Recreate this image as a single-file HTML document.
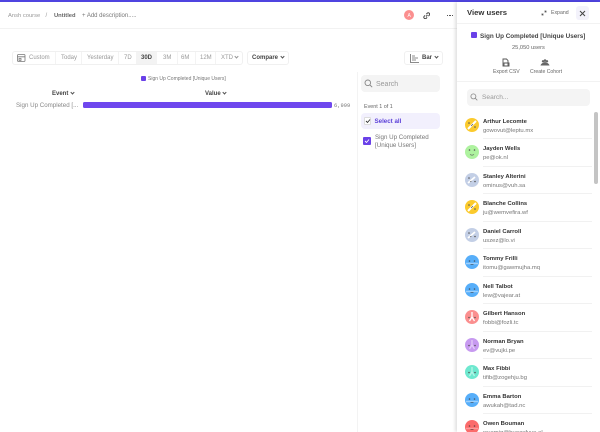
<!DOCTYPE html>
<html><head><meta charset="utf-8"><style>
html,body{margin:0;padding:0;width:600px;height:432px;overflow:hidden;background:#fff}
body{position:relative;font-family:"Liberation Sans",sans-serif;color:#555;filter:blur(.3px)}
.t,.b{position:absolute;white-space:nowrap}
.t{line-height:10px;font-size:6px;margin-top:1px}
.b{box-sizing:border-box}
.d{position:absolute;width:2px;height:2px;border-bottom:1px solid #555;border-right:1px solid #555;transform:rotate(45deg);box-sizing:content-box}
.n{left:483px;font-size:5.9px;font-weight:bold;color:#333}
.e{left:483px;font-size:5.9px;color:#777}
.a{position:absolute;left:465px;width:14px;height:14px}
.l{position:absolute;left:483px;width:109px;height:1px;background:#f1f1f1}
.g{color:#666;font-size:6px}
.r{margin-top:0}
</style></head><body>
<svg width="0" height="0" style="position:absolute"><defs>
<g id="f1"><circle cx="7" cy="7" r="7" fill="#fbca2d"/><path d="M3 11 11 3" stroke="#fff" stroke-width="2"/><circle cx="4" cy="5" r=".8" fill="#555"/><circle cx="10" cy="9" r=".8" fill="#555"/><path d="M6 8 8 6" stroke="#555" stroke-width=".7"/></g>
<g id="f2"><circle cx="7" cy="7" r="7" fill="#aef29f"/><circle cx="4.500" cy="5" r=".8" fill="#555"/><circle cx="9.500" cy="5" r=".8" fill="#555"/><path d="M5 9.500Q7 10.800 9 9.500" stroke="#555" stroke-width=".7" fill="none"/></g>
<g id="f3"><circle cx="7" cy="7" r="7" fill="#c3cfe6"/><path d="M3 10 10 4" stroke="#fff" stroke-width="1.800"/><circle cx="4" cy="5" r=".8" fill="#555"/><circle cx="10" cy="8.500" r=".8" fill="#555"/><path d="M5 9 6.500 8" stroke="#555" stroke-width=".7"/></g>
<g id="f4"><circle cx="7" cy="7" r="7" fill="#57aef9"/><path d="M1 8.500H13" stroke="#9fd0fb" stroke-width="1.500"/><circle cx="4.500" cy="6" r=".8" fill="#456"/><circle cx="9.500" cy="6" r=".8" fill="#456"/><path d="M5.500 9.500H8.500" stroke="#456" stroke-width=".7"/></g>
<g id="f5"><circle cx="7" cy="7" r="7" fill="#fb8f8f"/><path d="M7 2V7L4.500 11M7 7 9.500 11" stroke="#fff" stroke-width="1.300" fill="none"/><circle cx="4" cy="7.500" r=".8" fill="#555"/><circle cx="10" cy="7.500" r=".8" fill="#555"/></g>
<g id="f6"><circle cx="7" cy="7" r="7" fill="#c79af0"/><path d="M7 2V7L4.500 11M7 7 9.500 11" stroke="#e3ccf8" stroke-width="1.300" fill="none"/><circle cx="4" cy="7.500" r=".8" fill="#555"/><circle cx="10" cy="7.500" r=".8" fill="#555"/></g>
<g id="f7"><circle cx="7" cy="7" r="7" fill="#6ee8cf"/><path d="M7 2V7L4.500 11M7 7 9.500 11" stroke="#b6f4e7" stroke-width="1.300" fill="none"/><circle cx="4" cy="7.500" r=".8" fill="#555"/><circle cx="10" cy="7.500" r=".8" fill="#555"/></g>
<g id="f8"><circle cx="7" cy="7" r="7" fill="#fb6b6b"/><path d="M1 8.500H13" stroke="#fc9a9a" stroke-width="1.500"/><circle cx="4.500" cy="6" r=".8" fill="#644"/><circle cx="9.500" cy="6" r=".8" fill="#644"/><path d="M5.500 9.500H8.500" stroke="#644" stroke-width=".7"/></g>
</defs></svg>
<div class="b" style="left:0;top:0;width:600px;height:2px;background:#4f44e0"></div>
<div class="b" style="left:0;top:28px;width:457px;height:1px;background:#f2f2f2"></div>
<span class="t" style="left:8px;top:10px;color:#999;font-size:5.800px">Ansh course</span>
<span class="t" style="left:45.500px;top:10px;color:#999">/</span>
<span class="t" style="left:54px;top:10px;color:#666;font-weight:bold;font-size:5.800px">Untitled</span>
<span class="t" style="left:82px;top:10px;color:#777">+ Add description.....</span>
<div class="b" style="left:404px;top:10px;width:10px;height:10px;border-radius:50%;background:#fb8f8f"></div>
<span class="t" style="left:407.500px;top:9.500px;color:#fff;font-size:5px">A</span>
<svg style="position:absolute;left:422.500px;top:11.500px" width="7.500" height="7.500" viewBox="0 0 10 10" fill="none" stroke="#444" stroke-width="1.300"><path d="M4 6 6 4M4.500 2.800 5.600 1.700a1.600 1.600 0 0 1 2.700 2.700L7.200 5.500M5.500 7.200 4.400 8.300A1.600 1.600 0 0 1 1.700 5.600L2.800 4.500"/></svg>
<div class="b" style="left:447px;top:14.500px;width:1.300px;height:1.300px;background:#555"></div>
<div class="b" style="left:449.400px;top:14.500px;width:1.300px;height:1.300px;background:#555"></div>
<div class="b" style="left:451.800px;top:14.500px;width:1.300px;height:1.300px;background:#555"></div>

<div class="b" style="left:12px;top:51px;width:231px;height:14px;border:1px solid #f0f0f0;border-radius:3px"></div>
<svg style="position:absolute;left:17px;top:54px" width="9" height="8" viewBox="0 0 9 8" fill="none" stroke="#777" stroke-width=".8"><rect x=".5" y=".5" width="7.500" height="7" rx="1"/><path d="M.5 2.800H8M2 4.500h2v1.800H2z"/></svg>
<span class="t g r" style="left:29px;top:53px;color:#999">Custom</span>
<span class="t g r" style="left:61px;top:53px;color:#999">Today</span>
<span class="t g r" style="left:87px;top:53px;color:#999">Yesterday</span>
<span class="t g r" style="left:124px;top:53px;color:#999">7D</span>
<div class="b" style="left:136px;top:52px;width:21px;height:12px;background:#f3f3f3"></div>
<span class="t r" style="left:141px;top:53px;color:#444;font-weight:bold">30D</span>
<span class="t g r" style="left:163px;top:53px;color:#999">3M</span>
<span class="t g r" style="left:181px;top:53px;color:#999">6M</span>
<span class="t g r" style="left:200px;top:53px;color:#999">12M</span>
<span class="t g r" style="left:221px;top:53px;color:#999">XTD</span>
<div class="d" style="left:235px;top:55px;border-color:#999"></div>
<div class="b" style="left:55px;top:52px;width:1px;height:12px;background:#f3f3f3"></div>
<div class="b" style="left:81px;top:52px;width:1px;height:12px;background:#f3f3f3"></div>
<div class="b" style="left:118px;top:52px;width:1px;height:12px;background:#f3f3f3"></div>
<div class="b" style="left:177px;top:52px;width:1px;height:12px;background:#f3f3f3"></div>
<div class="b" style="left:195px;top:52px;width:1px;height:12px;background:#f3f3f3"></div>
<div class="b" style="left:215px;top:52px;width:1px;height:12px;background:#f3f3f3"></div>
<div class="b" style="left:247px;top:51px;width:42px;height:14px;border:1px solid #f0f0f0;border-radius:3px"></div>
<span class="t r" style="left:252px;top:53px;color:#444;font-weight:bold">Compare</span>
<div class="d" style="left:280.500px;top:55px"></div>

<div class="b" style="left:404px;top:51px;width:39px;height:14px;border:1px solid #f0f0f0;border-radius:3px"></div>
<svg style="position:absolute;left:410px;top:53.500px" width="9" height="9" viewBox="0 0 9 9" fill="none" stroke="#666" stroke-width=".8"><path d="M.5 0v8.500H9M2 2h3M2 4h6M2 6h4"/></svg>
<span class="t r" style="left:422px;top:53px;color:#444;font-weight:bold">Bar</span>
<div class="d" style="left:434.500px;top:55px"></div>

<div class="b" style="left:141px;top:76px;width:5px;height:5px;background:#6a41e8;border-radius:1px"></div>
<span class="t r" style="left:148px;top:74px;font-size:5px;color:#777">Sign Up Completed [Unique Users]</span>
<span class="t" style="left:52px;top:88px;font-weight:bold;color:#444">Event</span>
<div class="d" style="left:70.500px;top:90.500px"></div>
<span class="t" style="left:205px;top:88px;font-weight:bold;color:#444">Value</span>
<div class="d" style="left:222.500px;top:90.500px"></div>
<span class="t" style="left:16px;top:100px;color:#888;font-size:6.200px">Sign Up Completed [...</span>
<div class="b" style="left:83px;top:102px;width:249px;height:6px;background:#6f47ee;border-radius:1.500px"></div>
<span class="t" style="left:334px;top:99.500px;font-family:'Liberation Mono',monospace;font-size:5.400px;color:#777">6,999</span>

<div class="b" style="left:357px;top:72px;width:1px;height:360px;background:#f3f3f3"></div>
<div class="b" style="left:361px;top:75px;width:79px;height:17px;background:#f4f4f4;border-radius:4px"></div>
<svg style="position:absolute;left:364px;top:79px" width="9" height="9" viewBox="0 0 9 9" fill="none" stroke="#888" stroke-width=".9"><circle cx="3.800" cy="3.800" r="2.800"/><path d="M6 6 8.200 8.200"/></svg>
<span class="t" style="left:376px;top:79px;font-size:7px;color:#999">Search</span>
<span class="t" style="left:364px;top:101px;font-size:5.400px;color:#666">Event 1 of 1</span>
<div class="b" style="left:361px;top:113px;width:79px;height:16px;background:#f2f0fd;border-radius:4px"></div>
<div class="b" style="left:364px;top:117px;width:7px;height:8px;background:#fff;border:.5px solid #ddd;border-radius:1px"></div>
<svg style="position:absolute;left:365px;top:118px" width="6" height="6" viewBox="0 0 6 6" fill="none" stroke="#333" stroke-width=".9"><path d="M1 3 2.500 4.500 5 1.500"/></svg>
<span class="t" style="left:374.500px;top:116px;font-weight:bold;color:#5b3fd8;font-size:6.200px">Select all</span>
<div class="b" style="left:363px;top:137px;width:8px;height:8px;background:#6a41e8;border-radius:1px"></div>
<svg style="position:absolute;left:364px;top:138px" width="6" height="6" viewBox="0 0 6 6" fill="none" stroke="#fff" stroke-width=".9"><path d="M1 3 2.500 4.500 5 1.500"/></svg>
<span class="t" style="left:375px;top:133px;color:#777;font-size:6.200px;line-height:7.500px">Sign Up Completed<br>[Unique Users]</span>

<div class="b" style="left:457px;top:2px;width:143px;height:430px;background:#fff;box-shadow:-2px 0 3px rgba(0,0,0,.12)"></div>
<span class="t" style="left:467px;top:7px;font-size:7.700px;font-weight:bold;color:#333">View users</span>
<svg style="position:absolute;left:541px;top:9.500px" width="6" height="6" viewBox="0 0 6 6" fill="none" stroke="#555" stroke-width=".8"><path d="M1 5 2.300 3.700M3.700 2.300 5 1M1 3.500V5H2.500M3.500 1H5V2.500"/></svg>
<span class="t" style="left:551px;top:7px;font-size:5.200px;color:#666">Expand</span>
<div class="b" style="left:576px;top:6px;width:13px;height:14px;background:#f3f2fb;border-radius:3px"></div>
<svg style="position:absolute;left:579px;top:9.500px" width="7" height="7" viewBox="0 0 7 7" fill="none" stroke="#444" stroke-width="1"><path d="M1 1 6 6M6 1 1 6"/></svg>
<div class="b" style="left:457px;top:23px;width:143px;height:1px;background:#f2f2f2"></div>
<div class="b" style="left:471px;top:32px;width:6px;height:6px;background:#6a41e8;border-radius:1px"></div>
<span class="t" style="left:480px;top:31px;font-size:6.350px;font-weight:bold;color:#444">Sign Up Completed [Unique Users]</span>
<span class="t" style="left:512px;top:42px;font-size:5.700px;color:#666">25,050 users</span>
<svg style="position:absolute;left:501px;top:58px" width="9" height="9" viewBox="0 0 9 9" fill="none" stroke="#555" stroke-width=".9"><path d="M2 8V1h3.500L7 2.500V8zM3 5h5v3H3z"/></svg>
<span class="t" style="left:493px;top:66px;font-size:5.100px;color:#666">Export CSV</span>
<svg style="position:absolute;left:540px;top:59px" width="10" height="7" viewBox="0 0 10 7" fill="#666"><circle cx="3" cy="2.300" r="1.200"/><circle cx="5" cy="1.600" r="1.300"/><circle cx="7" cy="2.300" r="1.200"/><path d="M.5 6.500C1 4 5 3 5 3s4 1 4.500 3.500z"/></svg>
<span class="t" style="left:530px;top:66px;font-size:5.100px;color:#666">Create Cohort</span>
<div class="b" style="left:457px;top:81px;width:143px;height:1px;background:#f2f2f2"></div>
<div class="b" style="left:467px;top:89px;width:123px;height:17px;background:#f4f4f4;border-radius:4px"></div>
<svg style="position:absolute;left:470px;top:93px" width="8" height="8" viewBox="0 0 8 8" fill="none" stroke="#888" stroke-width=".8"><circle cx="3.400" cy="3.400" r="2.500"/><path d="M5.300 5.300 7.300 7.300"/></svg>
<span class="t" style="left:482px;top:92px;font-size:6.600px;color:#999">Search...</span>
<div class="b" style="left:594px;top:112px;width:3.500px;height:72px;background:#c4c4c4;border-radius:2px"></div>

<svg class="a" style="top:117.500px" viewBox="0 0 14 14"><use href="#f1"/></svg><span class="t n" style="top:115.700px">Arthur Lecomte</span><span class="t e" style="top:124.800px">gowovut@leptu.mx</span><div class="l" style="top:138px"></div>
<svg class="a" style="top:145px" viewBox="0 0 14 14"><use href="#f2"/></svg><span class="t n" style="top:143.200px">Jayden Wells</span><span class="t e" style="top:152.300px">pe@ok.nl</span><div class="l" style="top:165.500px"></div>
<svg class="a" style="top:172.500px" viewBox="0 0 14 14"><use href="#f3"/></svg><span class="t n" style="top:170.700px">Stanley Alterini</span><span class="t e" style="top:179.800px">ominus@vuh.sa</span><div class="l" style="top:193px"></div>
<svg class="a" style="top:200px" viewBox="0 0 14 14"><use href="#f1"/></svg><span class="t n" style="top:198.200px">Blanche Collins</span><span class="t e" style="top:207.300px">ju@wemvefira.wf</span><div class="l" style="top:220.500px"></div>
<svg class="a" style="top:227.500px" viewBox="0 0 14 14"><use href="#f3"/></svg><span class="t n" style="top:225.700px">Daniel Carroll</span><span class="t e" style="top:234.800px">uszez@lo.vi</span><div class="l" style="top:248px"></div>
<svg class="a" style="top:255px" viewBox="0 0 14 14"><use href="#f4"/></svg><span class="t n" style="top:253.200px">Tommy Frilli</span><span class="t e" style="top:262.300px">itomu@gawmujha.mq</span><div class="l" style="top:275.500px"></div>
<svg class="a" style="top:282.500px" viewBox="0 0 14 14"><use href="#f4"/></svg><span class="t n" style="top:280.700px">Nell Talbot</span><span class="t e" style="top:289.800px">lew@vajear.at</span><div class="l" style="top:303px"></div>
<svg class="a" style="top:310px" viewBox="0 0 14 14"><use href="#f5"/></svg><span class="t n" style="top:308.200px">Gilbert Hanson</span><span class="t e" style="top:317.300px">fobbi@fozli.tc</span><div class="l" style="top:330.500px"></div>
<svg class="a" style="top:337.500px" viewBox="0 0 14 14"><use href="#f6"/></svg><span class="t n" style="top:335.700px">Norman Bryan</span><span class="t e" style="top:344.800px">ev@vujki.pe</span><div class="l" style="top:358px"></div>
<svg class="a" style="top:365px" viewBox="0 0 14 14"><use href="#f7"/></svg><span class="t n" style="top:363.200px">Max Fibbi</span><span class="t e" style="top:372.300px">tifib@zogehju.bg</span><div class="l" style="top:385.500px"></div>
<svg class="a" style="top:392.500px" viewBox="0 0 14 14"><use href="#f4"/></svg><span class="t n" style="top:390.700px">Emma Barton</span><span class="t e" style="top:399.800px">awukah@tad.nc</span><div class="l" style="top:413px"></div>
<svg class="a" style="top:420px" viewBox="0 0 14 14"><use href="#f8"/></svg><span class="t n" style="top:418.200px">Owen Bouman</span><span class="t e" style="top:427.300px">wuamiq@buozafuve.el</span>
</body></html>
